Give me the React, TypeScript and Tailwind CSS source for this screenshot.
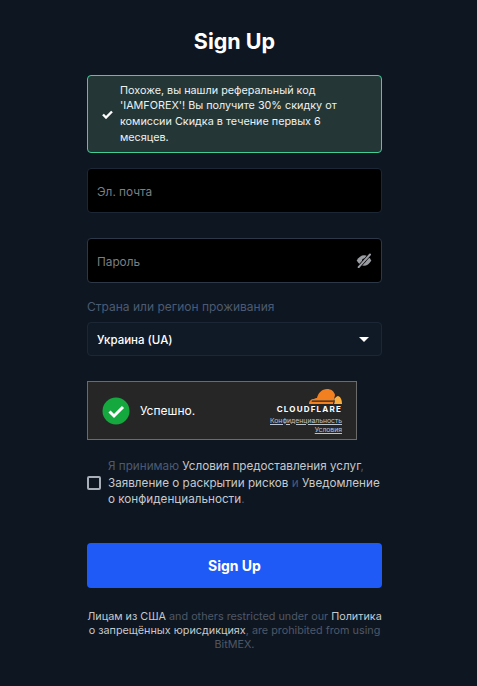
const font = { fontFamily: "Inter, sans-serif" }

function EyeOff() {
  return (
    <svg width="16" height="15" viewBox="0 0 24 22" fill="none" className="text-[#9a9da1]">
      <path d="M1 11c3-5 7-8 11-8s8 3 11 8c-3 5-7 8-11 8s-8-3-11-8z" fill="currentColor" />
      <circle cx="12" cy="11" r="3" fill="#000" />
      <path d="M4 21L21 2" stroke="#000" strokeWidth="5" />
      <path d="M4 21L21 2" stroke="currentColor" strokeWidth="3" strokeLinecap="round" />
    </svg>
  )
}

function CloudflareLogo() {
  return (
    <svg width="33" height="17" viewBox="0 0 33 17">
      <path d="M0 16c0-3 2-5 5-5 1-1 2-1 3-1 1-5 5-9 10-9 4 0 7 2 8 6l-1 4-1 5z" fill="#f38020" />
      <path d="M25 16c1-2 1-4 0-5 2-2 3-3 4-3 3 1 4 4 4 8z" fill="#faae40" />
      <path d="M3 12.500h22l-.5 1.200H2.500z" fill="#262626" />
    </svg>
  )
}

export default function App() {
  return (
    <div className="min-h-[686px] bg-[#0e1621] flex justify-center pr-2" style={font}>
      <div className="w-[295px] pt-[27px] flex flex-col">
        <h1 className="text-[21.500px] leading-[28px] font-bold text-white text-center">Sign Up</h1>

        <div className="mt-[20px] h-[78px] flex items-center gap-[7px] rounded border border-[#41cf98] bg-[#243636] pl-[14px] pr-[30px]">
          <svg width="11" height="9" viewBox="0 0 11 9" className="shrink-0">
            <path d="M1 4.500l3 3 6-6" fill="none" stroke="#fff" strokeWidth="2.400" />
          </svg>
          <p className="text-[10.800px] leading-[15.600px] text-[#edf1ef]">
            Похоже, вы нашли реферальный код 'IAMFOREX'! Вы получите 30% скидку от комиссии Скидка в течение первых 6 месяцев.
          </p>
        </div>

        <div className="mt-[15px] h-[45px] flex items-center rounded border border-[#1c2736] bg-black px-[9px]">
          <span className="pt-[4px] text-[11.800px] text-[#7c7f82]">Эл. почта</span>
        </div>

        <div className="mt-[25px] h-[45px] flex items-center justify-between rounded border border-[#2c3848] bg-black pl-[9px] pr-[9px]">
          <span className="pt-[4px] text-[11.800px] text-[#7c7f82]">Пароль</span>
          <EyeOff />
        </div>

        <label className="mt-[16px] text-[12px] leading-[16px] text-[#4b5b73]">Страна или регион проживания</label>

        <div className="mt-[7px] h-[34px] flex items-center justify-between rounded border border-[#1c2736] bg-[#101a26] pl-[9px] pr-[12px]">
          <span className="pt-[3px] text-[11.500px] font-medium text-white">Украина (UA)</span>
          <span className="w-0 h-0 border-x-[5px] border-x-transparent border-t-[5px] border-t-white" />
        </div>

        <div className="mt-[25px] w-[270px] h-[59px] flex items-center border border-[#6b6b6b] bg-[#262626] pl-[14px] pr-[14px]">
          <svg width="28" height="28" viewBox="0 0 28 28" className="shrink-0">
            <circle cx="14" cy="14" r="13.500" fill="#14a83f" />
            <path d="M7.500 14.500l4.500 4.500 9-9" fill="none" stroke="#fff" strokeWidth="3" />
          </svg>
          <span className="ml-[10px] text-[12px] text-white">Успешно.</span>
          <div className="ml-auto flex flex-col items-end">
            <CloudflareLogo />
            <span className="text-[8px] leading-[9px] font-bold tracking-[1.200px] text-white">CLOUDFLARE</span>
            <span className="mt-[2px] text-[6.800px] leading-[9px] text-[#b9c4d0] underline">Конфиденциальность</span>
            <span className="text-[6.800px] leading-[9px] text-[#b9c4d0] underline">Условия</span>
          </div>
        </div>

        <div className="mt-[18px] flex items-center gap-[7px]">
          <span className="w-[14px] h-[14px] shrink-0 rounded-[2px] border-2 border-[#a9afb8]" />
          <p className="-mr-1 text-[11.700px] leading-[16.500px] text-[#4b5b73]">
            Я принимаю <span className="text-[#c6c9cc]">Условия предоставления услуг</span>, <span className="text-[#c6c9cc]">Заявление о раскрытии рисков</span> и <span className="text-[#c6c9cc]">Уведомление о конфиденциальности</span>.
          </p>
        </div>

        <button className="mt-[35px] h-[45px] rounded bg-[#1f5af6] text-[14px] font-bold text-white">Sign Up</button>

        <p className="mt-[22px] text-center text-[10.800px] leading-[14.300px] text-[#4e5866]">
          <span className="text-[#c6c9cc]">Лицам из США</span> and others restricted under our <span className="text-[#c6c9cc]">Политика о запрещённых юрисдикциях</span>, are prohibited from using BitMEX.
        </p>
      </div>
    </div>
  )
}
